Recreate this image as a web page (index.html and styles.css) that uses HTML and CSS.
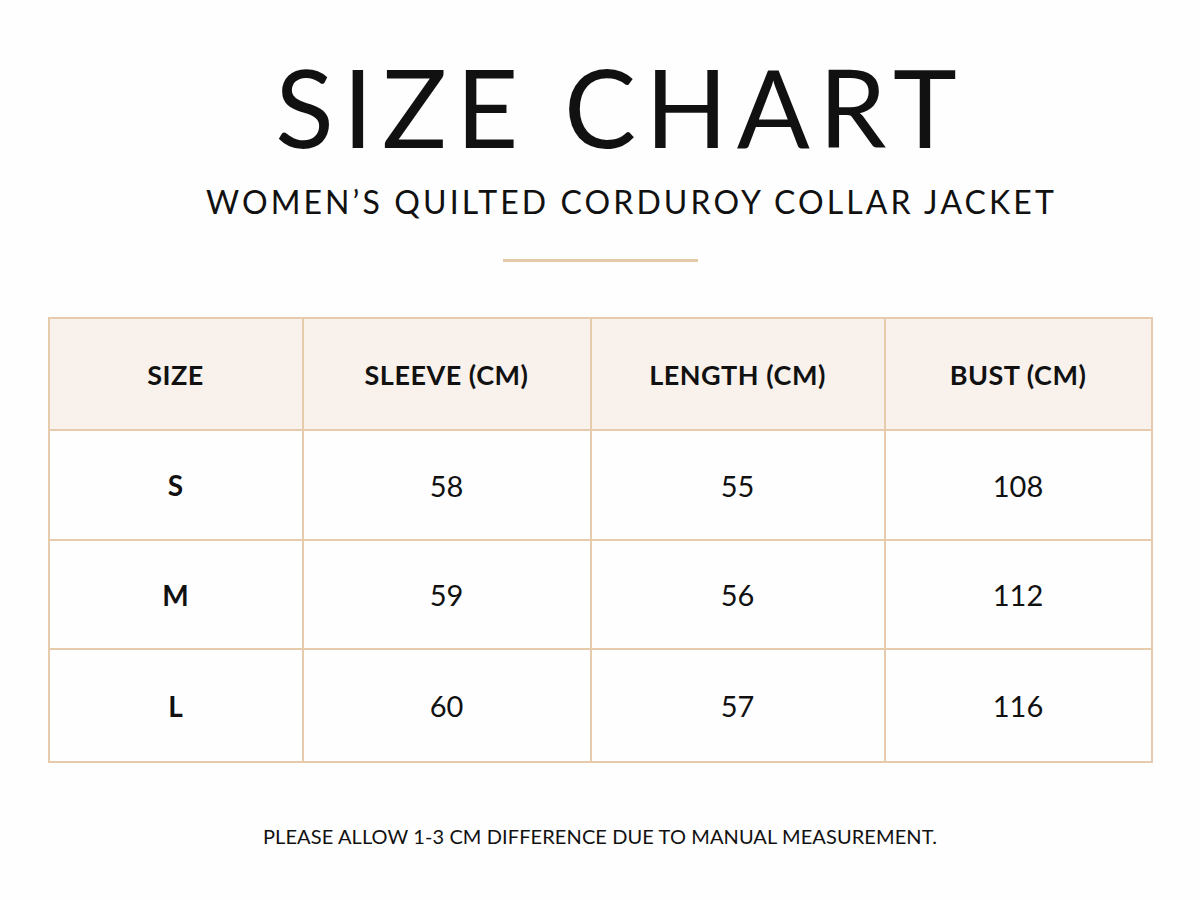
FILE: index.html
```html
<!DOCTYPE html>
<html>
<head>
<meta charset="utf-8">
<link rel="stylesheet" href="styles.css">
</head>
<body>
<div class="page">
  <h1 class="title">SIZE CHART</h1>
  <p class="subtitle">WOMEN’S QUILTED CORDUROY COLLAR JACKET</p>
  <div class="divider"></div>
  <table class="chart">
    <colgroup>
      <col class="c1"><col class="c2"><col class="c3"><col class="c4">
    </colgroup>
    <thead>
      <tr class="head"><th>SIZE</th><th>SLEEVE (CM)</th><th>LENGTH (CM)</th><th>BUST (CM)</th></tr>
    </thead>
    <tbody>
      <tr class="r1"><th>S</th><td>58</td><td>55</td><td>108</td></tr>
      <tr class="r2"><th>M</th><td>59</td><td>56</td><td>112</td></tr>
      <tr class="r3"><th>L</th><td>60</td><td>57</td><td>116</td></tr>
    </tbody>
  </table>
  <p class="note">PLEASE ALLOW 1-3 CM DIFFERENCE DUE TO MANUAL MEASUREMENT.</p>
</div>
</body>
</html>
```
FILE: styles.css
```css
html, body {
  margin: 0;
  padding: 0;
  background: #fefefe;
}
.page {
  width: 1200px;
  height: 900px;
  display: flex;
  flex-direction: column;
  align-items: center;
  font-family: Lato, "Liberation Sans", sans-serif;
  color: #111;
}
.title {
  margin: 52px 0 0 0;
  font-size: 108px;
  line-height: 1;
  font-weight: 400;
  letter-spacing: 9px;
  padding-left: 41px;
}
.subtitle {
  margin: 26px 0 0 0;
  font-size: 32px;
  line-height: 1;
  font-weight: 400;
  letter-spacing: 3.1px;
  padding-left: 63px;
}
.divider {
  margin-top: 41px;
  width: 195px;
  height: 3px;
  background: #e6c9a6;
}
.chart {
  margin-top: 55px;
  width: 1103px;
  border-collapse: collapse;
  table-layout: fixed;
}
.c1 { width: 254px; }
.c2 { width: 288px; }
.c3 { width: 294px; }
.c4 { width: 267px; }
.chart th, .chart td {
  border: 2px solid #e6cbad;
  text-align: center;
  padding: 0;
  color: #111;
}
.chart th { font-weight: 700; font-size: 28px; }
.chart td { font-weight: 400; font-size: 29px; }
.head th {
  background: #f9f1ec;
  height: 110px;
  font-size: 27px;
  letter-spacing: 0.5px;
}
.r1 th, .r1 td { height: 108px; }
.r2 th, .r2 td { height: 107px; }
.r3 th, .r3 td { height: 111px; }
.note {
  margin: 63px 0 0 0;
  font-size: 20px;
  line-height: 1;
  letter-spacing: 0.1px;
}
```
